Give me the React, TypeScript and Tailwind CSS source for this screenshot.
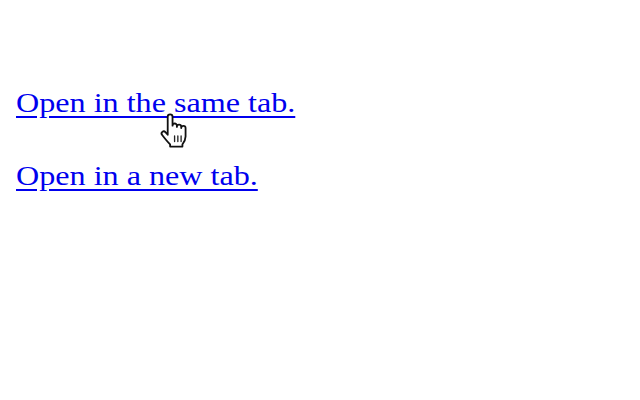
import React from "react";

const links = [
  { id: 1, label: "Open in the same tab.", target: "_self" },
  { id: 2, label: "Open in a new tab.", target: "_blank" },
];

// macOS-style pointing hand cursor
const HandCursor: React.FC = () => (
  <svg
    width="29"
    height="35"
    viewBox="0 0 24 29"
    className="absolute left-[159px] top-[113px] pointer-events-none"
  >
    <path
      d="M7.2 3.2a2 2 0 0 1 4 0V10.5a1.8 1.8 0 0 1 3.6 0v1a1.8 1.8 0 0 1 3.6 0v1a1.8 1.8 0 0 1 3.6 0v7c0 3-1.5 5-2.6 6.5v1.8H9.2v-1.8C7.2 24 4.6 20.8 2.6 18.2a1.8 1.8 0 0 1 2.7-2.4L7.2 18Z"
      fill="#fff"
      stroke="#111"
      strokeWidth="1.5"
      strokeLinejoin="round"
    />
    <path d="M12.9 19v4.6M15.6 19v4.6M18.3 19v4.6" stroke="#222" strokeWidth="1.1" strokeLinecap="round" />
  </svg>
);

export default function App() {
  return (
    <div className="relative w-[640px] h-[400px] bg-white overflow-hidden">
      <div className="flex flex-col items-start gap-[42px] pl-[16px] pt-[88px]">
        {links.map((link) => (
          <a
            key={link.id}
            href="#"
            target={link.target}
            className="block origin-left scale-x-[1.19] font-['Liberation_Serif',serif] text-[27px] leading-[31px] text-[#0000ee] underline decoration-2 underline-offset-[4px] whitespace-nowrap"
          >
            {link.label}
          </a>
        ))}
      </div>
      <HandCursor />
    </div>
  );
}
